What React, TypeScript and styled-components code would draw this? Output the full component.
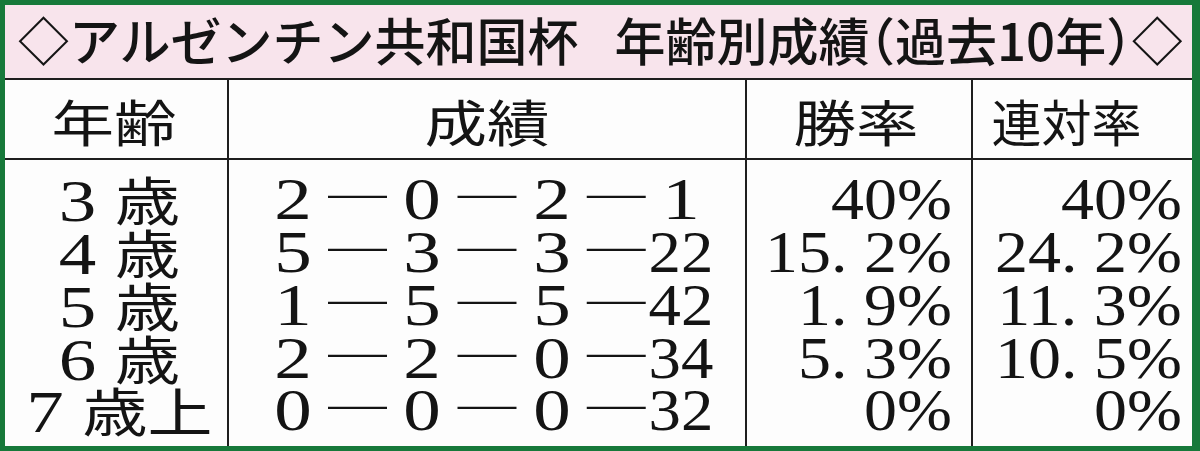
import React from "react";
import styled, { createGlobalStyle } from "styled-components";

const GREEN = "#17793a";
const INK = "#141414";
const RULE = "#1e1e1e";
const COLS = "222px 518px 226px 1fr";
const LINE = 52.75;

const GlobalStyle = createGlobalStyle`
  html, body { margin: 0; padding: 0; background: #ffffff; }
  #root { width: 1200px; height: 451px; }
`;

const Frame = styled.div`
  box-sizing: border-box;
  width: 1200px;
  height: 451px;
  border: 5px solid ${GREEN};
  border-right-width: 8px;
  background: #fdfdfd;
  color: ${INK};
  display: flex;
  flex-direction: column;
  overflow: hidden;
`;

const TitleBar = styled.h1`
  box-sizing: border-box;
  margin: 0;
  height: 75px;
  flex: none;
  background: #f8e4ec;
  border-bottom: 2px solid ${RULE};
  display: flex;
  align-items: center;
  padding: 0 0 4px 13px;
  font-family: "Noto Sans CJK JP", sans-serif;
  font-size: 51px;
  font-weight: 500;
  line-height: 1;
  white-space: nowrap;
`;

const TitleGap = styled.span`
  display: inline-block;
  width: 36px;
`;

const TitlePunct = styled.span`
  font-feature-settings: "halt" 1;
`;

const HeaderRow = styled.div`
  box-sizing: border-box;
  height: 80px;
  flex: none;
  display: grid;
  grid-template-columns: ${COLS};
  border-bottom: 2px solid ${RULE};
`;

const HeaderCell = styled.div<{ $first?: boolean; $padRight?: number }>`
  box-sizing: border-box;
  border-left: ${(p) => (p.$first ? "none" : `2px solid ${RULE}`)};
  display: flex;
  align-items: center;
  justify-content: center;
  padding: 2px ${(p) => p.$padRight ?? 0}px 0 0;
  font-family: "Noto Sans CJK JP", sans-serif;
  font-size: 50px;
  font-weight: 400;
  line-height: 1;
  white-space: nowrap;
`;

const Stretch = styled.span<{ $scale: number; $origin?: string }>`
  display: inline-block;
  transform: scaleX(${(p) => p.$scale});
  transform-origin: ${(p) => p.$origin ?? "center"} center;
`;

const BodyRow = styled.div`
  flex: 1;
  display: grid;
  grid-template-columns: ${COLS};
`;

const BodyCell = styled.div<{
  $first?: boolean;
  $align: "center" | "right";
  $padLeft?: number;
  $padRight?: number;
}>`
  box-sizing: border-box;
  border-left: ${(p) => (p.$first ? "none" : `2px solid ${RULE}`)};
  padding: 13.4px ${(p) => p.$padRight ?? 0}px 0 ${(p) => p.$padLeft ?? 0}px;
  display: flex;
  flex-direction: column;
  text-align: ${(p) => p.$align};
  font-family: "Liberation Serif", "Noto Sans CJK JP", serif;
  font-size: 60px;
  font-weight: 400;
`;

const Line = styled.div`
  height: ${LINE}px;
  line-height: ${LINE}px;
  white-space: nowrap;
`;

const Kanji = styled.span`
  font-family: "Noto Sans CJK JP", sans-serif;
  font-size: 52px;
  line-height: 1;
`;

const ScoreLine = styled.div`
  height: ${LINE}px;
  line-height: ${LINE}px;
  display: grid;
  grid-template-columns: repeat(7, 64.7px);
  justify-content: center;
  align-items: baseline;
  white-space: nowrap;
`;

const Slot = styled.div`
  text-align: center;
`;

const Dash = styled.span`
  display: block;
  text-align: center;
  font-family: "Noto Sans CJK JP", sans-serif;
  font-size: 59px;
  font-weight: 300;
  line-height: 40px;
`;

type Row = { age: string; suffix: string; score: string[]; win: string; place: string };

const rows: Row[] = [
  { age: "3", suffix: "歳", score: ["2", "0", "2", "1"], win: "40%", place: "40%" },
  { age: "4", suffix: "歳", score: ["5", "3", "3", "22"], win: "15. 2%", place: "24. 2%" },
  { age: "5", suffix: "歳", score: ["1", "5", "5", "42"], win: "1. 9%", place: "11. 3%" },
  { age: "6", suffix: "歳", score: ["2", "2", "0", "34"], win: "5. 3%", place: "10. 5%" },
  { age: "7", suffix: "歳上", score: ["0", "0", "0", "32"], win: "0%", place: "0%" },
];

export default function App() {
  return (
    <>
      <GlobalStyle />
      <Frame>
        <TitleBar>
          ◇アルゼンチン共和国杯
          <TitleGap />
          年齢別成績
          <TitlePunct>（</TitlePunct>
          過去10年
          <TitlePunct>）</TitlePunct>◇
        </TitleBar>
        <HeaderRow>
          <HeaderCell $first $padRight={5}>
            <Stretch $scale={1.25}>年齢</Stretch>
          </HeaderCell>
          <HeaderCell>
            <Stretch $scale={1.25}>成績</Stretch>
          </HeaderCell>
          <HeaderCell $padRight={6}>
            <Stretch $scale={1.25}>勝率</Stretch>
          </HeaderCell>
          <HeaderCell $padRight={32}>
            <Stretch $scale={1}>連対率</Stretch>
          </HeaderCell>
        </HeaderRow>
        <BodyRow>
          <BodyCell $first $align="center" $padLeft={7}>
            {rows.map((r) => (
              <Line key={r.age}>
                <Stretch $scale={1.25}>
                  {r.age} <Kanji>{r.suffix}</Kanji>
                </Stretch>
              </Line>
            ))}
          </BodyCell>
          <BodyCell $align="center">
            {rows.map((r) => (
              <ScoreLine key={r.age}>
                {r.score.map((s, i) => (
                  <React.Fragment key={i}>
                    {i > 0 && <Dash>─</Dash>}
                    <Slot>
                      <Stretch $scale={s.length > 1 ? 1.08 : 1.25}>{s}</Stretch>
                    </Slot>
                  </React.Fragment>
                ))}
              </ScoreLine>
            ))}
          </BodyCell>
          <BodyCell $align="right" $padRight={19}>
            {rows.map((r) => (
              <Line key={r.age}>
                <Stretch $scale={1.1} $origin="right">
                  {r.win}
                </Stretch>
              </Line>
            ))}
          </BodyCell>
          <BodyCell $align="right" $padRight={10}>
            {rows.map((r) => (
              <Line key={r.age}>
                <Stretch $scale={1.1} $origin="right">
                  {r.place}
                </Stretch>
              </Line>
            ))}
          </BodyCell>
        </BodyRow>
      </Frame>
    </>
  );
}
